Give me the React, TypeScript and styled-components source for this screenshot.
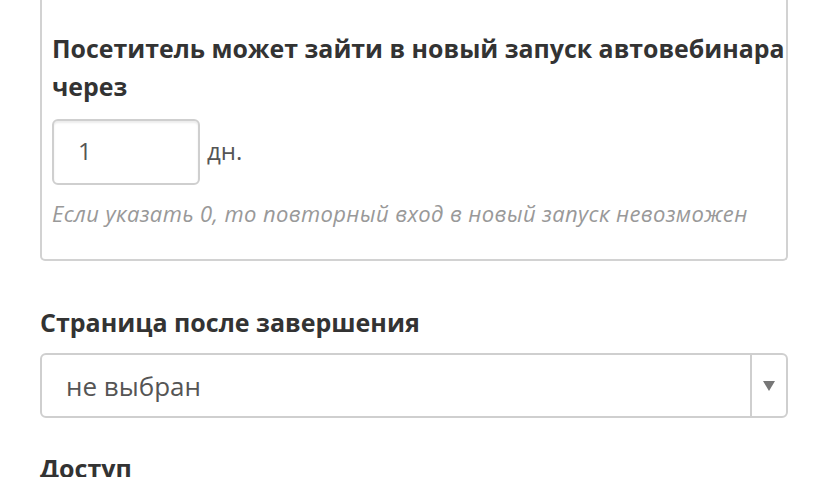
import React from "react";
import styled, { createGlobalStyle } from "styled-components";

const Global = createGlobalStyle`
  html, body { margin: 0; padding: 0; background: #fff; }
  body { font-family: "Open Sans", Lato, sans-serif; color: #333; overflow: hidden; }
`;

const Page = styled.div`
  width: 828px;
  height: 477px;
  box-sizing: border-box;
  padding: 0 40px;
  overflow: hidden;
`;

const Panel = styled.div`
  border: 2px solid #d2d2d2;
  border-top: none;
  border-radius: 0 0 5px 5px;
  padding: 29px 0 32px 10px;
`;

const Heading = styled.h3`
  margin: 0;
  font-size: 24.9px;
  line-height: 38px;
  font-weight: 700;
  color: #333;
`;

const InputRow = styled.div`
  display: flex;
  align-items: center;
  gap: 7px;
  margin-top: 14px;
`;

const NumberInput = styled.div`
  width: 148px;
  height: 66px;
  box-sizing: border-box;
  border: 2px solid #cfcfcf;
  border-radius: 6px;
  box-shadow: inset 0 2px 2px rgba(0, 0, 0, 0.08);
  display: flex;
  align-items: center;
  padding: 0 0 4px 24px;
  font-size: 24px;
  color: #555;
`;

const Unit = styled.span`
  font-size: 24px;
  color: #555;
  margin-top: -4px;
`;

const Hint = styled.p`
  margin: 14px 0 0;
  font-size: 22px;
  line-height: 28px;
  font-style: italic;
  letter-spacing: 0.38px;
  color: #999;
`;

const Label = styled.div<{ $top: number }>`
  margin-top: ${(p) => p.$top}px;
  font-size: 25px;
  line-height: 30px;
  font-weight: 700;
  color: #333;
`;

const Select = styled.div`
  margin-top: 16px;
  height: 65px;
  box-sizing: border-box;
  border: 2px solid #cfcfcf;
  border-radius: 6px;
  display: flex;
  align-items: stretch;
`;

const SelectValue = styled.div`
  flex: 1;
  display: flex;
  align-items: center;
  padding-left: 24px;
  font-size: 26px;
  color: #555;
`;

const SelectArrow = styled.div`
  width: 34px;
  border-left: 2px solid #cfcfcf;
  display: flex;
  align-items: center;
  justify-content: center;
`;

const Triangle = styled.span`
  width: 0;
  height: 0;
  border-left: 6px solid transparent;
  border-right: 6px solid transparent;
  border-top: 10px solid #777;
`;

export default function App() {
  return (
    <Page>
      <Global />
      <Panel>
        <Heading>Посетитель может зайти в новый запуск автовебинара через</Heading>
        <InputRow>
          <NumberInput>1</NumberInput>
          <Unit>дн.</Unit>
        </InputRow>
        <Hint>Если указать 0, то повторный вход в новый запуск невозможен</Hint>
      </Panel>
      <Label $top={46}>Страница после завершения</Label>
      <Select>
        <SelectValue>не выбран</SelectValue>
        <SelectArrow>
          <Triangle />
        </SelectArrow>
      </Select>
      <Label $top={35}>Доступ</Label>
    </Page>
  );
}
